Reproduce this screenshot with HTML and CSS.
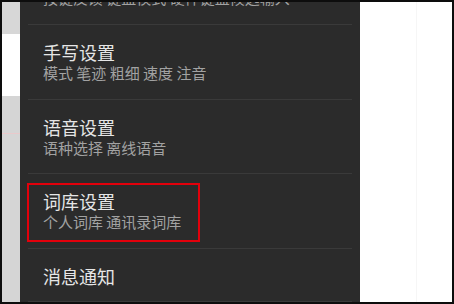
FILE: index.html
```html
<!DOCTYPE html>
<html lang="zh-CN">
<head>
<meta charset="utf-8">
<title>设置</title>
<link rel="stylesheet" href="styles.css">
</head>
<body>
<div class="frame">
  <div class="side-left">
    <div class="sl-top"></div>
    <div class="sl-white"></div>
    <div class="sl-bottom"><div class="sl-pink"></div></div>
  </div>
  <div class="panel">
    <div class="row row-first">
      <div class="title">键盘设置</div>
      <div class="sub">按键反馈 键盘模式 硬件键盘候选输入</div>
    </div>
    <div class="row">
      <div class="title">手写设置</div>
      <div class="sub">模式 笔迹 粗细 速度 注音</div>
    </div>
    <div class="row">
      <div class="title">语音设置</div>
      <div class="sub">语种选择 离线语音</div>
    </div>
    <div class="row row-marked">
      <div class="title">词库设置</div>
      <div class="sub">个人词库 通讯录词库</div>
      <div class="mark"></div>
    </div>
    <div class="row row-last">
      <div class="title">消息通知</div>
    </div>
    <div class="row-end"></div>
  </div>
  <div class="side-right"><div class="sr-line"></div></div>
</div>
</body>
</html>
```
FILE: styles.css
```css
html, body {
  margin: 0;
  padding: 0;
  background: #0d0d0d;
}
body {
  font-family: "Noto Sans CJK SC", "Noto Sans", sans-serif;
}
.frame {
  width: 454px;
  height: 304px;
  box-sizing: border-box;
  padding: 2px 2px 2px 2px;
  background: #0d0d0d;
  display: flex;
  overflow: hidden;
}
.side-left {
  width: 18px;
  display: flex;
  flex-direction: column;
}
.sl-top {
  height: 32px;
  background: #d7d7d7;
}
.sl-white {
  height: 62px;
  background: #ffffff;
}
.sl-bottom {
  flex: 1;
  background: #d5d5d5;
  padding-top: 37px;
}
.sl-pink {
  height: 1px;
  background: #e9c9cb;
}
.panel {
  width: 340px;
  background: #2b2b2b;
  overflow: hidden;
  display: flex;
  flex-direction: column;
}
.row {
  position: relative;
  flex: none;
  height: 74.67px;
  box-sizing: border-box;
  border-top: 1px solid #3a3a3a;
  margin: 0 8px;
  padding: 16px 0 0 15px;
}
.row-first {
  margin-top: -52.67px;
}
.row-last {
  height: 53px;
}
.row-end {
  height: 1px;
  margin: 0 8px;
  background: #3a3a3a;
  flex: none;
}
.title {
  font-size: 18px;
  line-height: 22px;
  color: #e6e6e6;
  white-space: nowrap;
}
.sub {
  font-size: 15px;
  line-height: 20px;
  color: #a2a2a2;
  white-space: nowrap;
}
.mark {
  position: absolute;
  left: -1px;
  top: 9px;
  width: 173px;
  height: 59px;
  box-sizing: border-box;
  border: 2px solid #e3000b;
}
.side-right {
  width: 92px;
  background: #ffffff;
  display: flex;
}
.sr-line {
  margin-left: 56px;
  width: 1px;
  background: #f6f6f6;
}
```
